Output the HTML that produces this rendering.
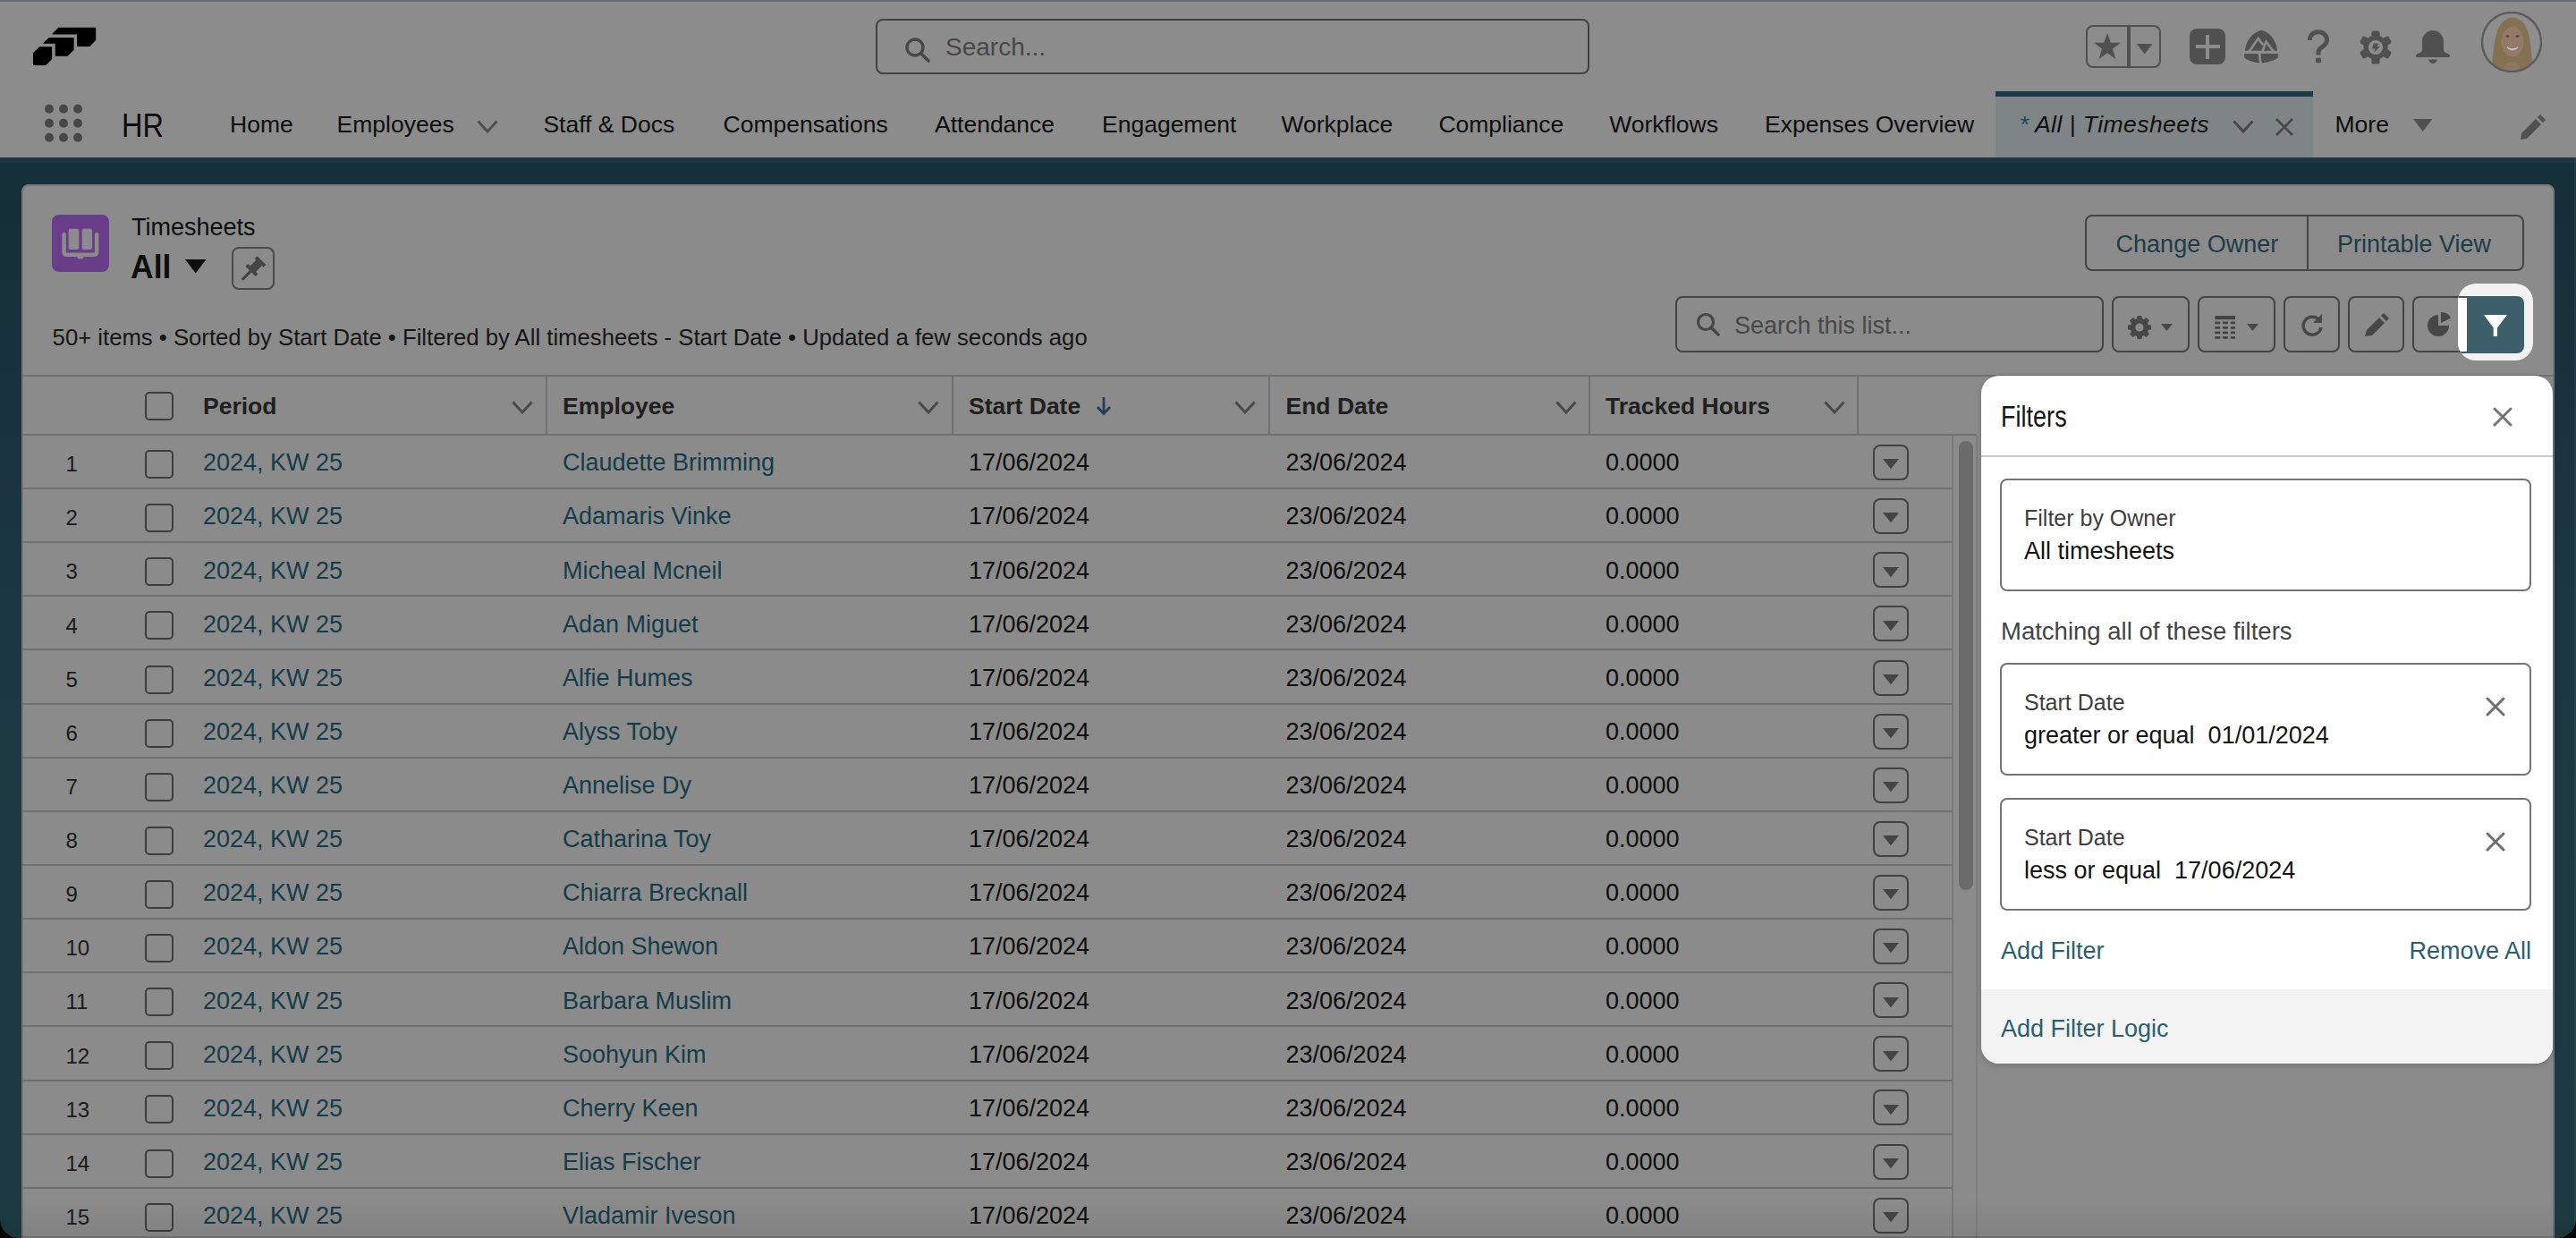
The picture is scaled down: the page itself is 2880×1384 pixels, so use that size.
<!DOCTYPE html>
<html><head><meta charset="utf-8"><title>Timesheets</title>
<style>
html,body{margin:0;padding:0;}
body{width:2880px;height:1384px;overflow:hidden;position:relative;background:#8c8c8c;font-family:"Liberation Sans", sans-serif;}
.t{position:absolute;white-space:pre;}
.r{position:absolute;}
</style></head><body>
<div class="r" style="left:0px;top:0px;width:2880px;height:176px;background:#8c8c8c;border-radius:0;"></div><div class="r" style="left:0px;top:0px;width:2880px;height:2px;background:#686c71;border-radius:0;"></div><svg class="r" style="left:0px;top:0px;" width="140" height="90" viewBox="0 0 140 90"><path d="M58.4,37.8 L65.4,30.8 L107.2,30.8 L107.2,45 L100.2,52 L58.4,52 Z" fill="#000"/><path d="M47.7,48.9 L54.7,41.9 L82.6,41.9 L82.6,55.8 L75.6,62.8 L47.7,62.8 Z" fill="#000" stroke="#8c8c8c" stroke-width="7" paint-order="stroke"/><path d="M37,59.3 L44,52.3 L58.2,52.3 L58.2,66 L51.2,73 L37,73 Z" fill="#000" stroke="#8c8c8c" stroke-width="7" paint-order="stroke"/></svg><div class="r" style="left:979px;top:21px;width:798px;height:62px;background:none;border:2px solid #424242;box-sizing:border-box;border-radius:8px;"></div><svg class="r" style="left:1010px;top:40px;" width="32" height="32" viewBox="0 0 32 32"><circle cx="13" cy="13" r="9" fill="none" stroke="#474747" stroke-width="3.4"/><line x1="19.5" y1="19.5" x2="28" y2="28" stroke="#474747" stroke-width="3.6" stroke-linecap="round"/></svg><div class="t" style="left:1057px;top:38.99px;font-size:28px;line-height:28px;color:#474747;font-weight:400;">Search...</div><div class="r" style="left:2332px;top:28px;width:84px;height:48px;background:none;border:2px solid #505050;box-sizing:border-box;border-radius:8px;"></div><div class="r" style="left:2378px;top:29px;width:4px;height:46px;background:#505050;border-radius:0;"></div><svg class="r" style="left:2340px;top:36px;" width="32" height="32" viewBox="0 0 32 32"><path d="M16,1 L19.8,11.8 L31,11.8 L22,18.6 L25.3,30 L16,23.2 L6.7,30 L10,18.6 L1,11.8 L12.2,11.8 Z" fill="#505050"/></svg><svg class="r" style="left:2389px;top:49px;" width="18" height="12" viewBox="0 0 18 12"><path d="M0,0 L17.5,0 L8.75,11.5 Z" fill="#505050"/></svg><div class="r" style="left:2448px;top:32px;width:40px;height:40px;background:#505050;border-radius:8px;"></div><div class="r" style="left:2454.5px;top:50.2px;width:27.5px;height:4.099999999999994px;background:#8c8c8c;border-radius:0;"></div><div class="r" style="left:2466px;top:38.5px;width:4.199999999999818px;height:27.5px;background:#8c8c8c;border-radius:0;"></div><svg class="r" style="left:2509px;top:33px;" width="38" height="38" viewBox="0 0 38 38"><path d="M1,23.7 C1.5,13 9,3.5 19.4,0.5 C29.5,3.5 36.5,13 37,23.7 Z" fill="#505050"/>
<path d="M5.7,24.5 L15.7,9.9 L21.2,17.2 M20.3,24.5 L24.6,13.6 L32.6,24.5" fill="none" stroke="#8c8c8c" stroke-width="2.6" stroke-linejoin="miter"/>
<path d="M0.2,27 L37.8,27 L37.8,31.8 C32,35.5 25,37.4 19,37.4 C13,37.4 6,35.5 0.2,31.8 Z" fill="#505050"/>
<path d="M16,26.5 C20,29.5 15.5,32.5 19,38" fill="none" stroke="#8c8c8c" stroke-width="2.6"/></svg><svg class="r" style="left:2578px;top:33px;" width="28" height="39" viewBox="0 0 28 39"><path d="M4.3,12 C4.3,6 8.5,2.8 14,2.8 C19.5,2.8 23.6,6.5 23.6,11.5 C23.6,16 20.5,18 17.5,20 C15,21.6 14,23 14,26 L14,28.5" fill="none" stroke="#505050" stroke-width="5" stroke-linecap="butt"/><rect x="11" y="31.7" width="6" height="5.6" rx="1" fill="#505050"/></svg><svg class="r" style="left:2637px;top:34px;" width="38" height="38" viewBox="0 0 38 38"><circle cx="19" cy="19" r="13.6" fill="#505050"/><rect x="-4.6" y="-18.5" width="9.2" height="9" rx="2.6" fill="#505050" transform="translate(19,19) rotate(0)"/><rect x="-4.6" y="-18.5" width="9.2" height="9" rx="2.6" fill="#505050" transform="translate(19,19) rotate(60)"/><rect x="-4.6" y="-18.5" width="9.2" height="9" rx="2.6" fill="#505050" transform="translate(19,19) rotate(120)"/><rect x="-4.6" y="-18.5" width="9.2" height="9" rx="2.6" fill="#505050" transform="translate(19,19) rotate(180)"/><rect x="-4.6" y="-18.5" width="9.2" height="9" rx="2.6" fill="#505050" transform="translate(19,19) rotate(240)"/><rect x="-4.6" y="-18.5" width="9.2" height="9" rx="2.6" fill="#505050" transform="translate(19,19) rotate(300)"/><circle cx="19" cy="19" r="8.1" fill="#8c8c8c"/><path d="M16.8,14.6 L22.3,14.6 L20.5,18.3 L23.8,18.3 L17.5,24.6 L18.6,20.5 L14.9,20.5 Z" fill="#505050"/></svg><svg class="r" style="left:2701px;top:33.5px;" width="38" height="38" viewBox="0 0 38 38"><path d="M19,0 C12,0 7,5.5 7,12.5 L7,22 C7,24 5,25 2,26 C0.5,26.5 0,27 0,28.5 C0,29.5 1,30 2,30 L36,30 C37,30 38,29.5 38,28.5 C38,27 37.5,26.5 36,26 C33,25 31,24 31,22 L31,12.5 C31,5.5 26,0 19,0 Z" fill="#505050"/><path d="M14,32.5 L24,32.5 C23,35.5 21,37 19,37 C17,37 15,35.5 14,32.5 Z" fill="#505050"/></svg><svg class="r" style="left:2774px;top:13px;" width="68" height="68" viewBox="0 0 68 68"><defs><clipPath id="avc"><circle cx="34" cy="34" r="32.5"/></clipPath></defs>
<circle cx="34" cy="34" r="33" fill="#8e8e8e"/>
<g clip-path="url(#avc)">
<path d="M11,70 C13,50 14,36 17,25 C20,14 27,6.5 35,6.5 C43,6.5 50,13 53,25 C56,37 56,52 59,70 Z" fill="#847151"/>
<path d="M24,70 C25,60 28,56 34.5,56 C41,56 44,60 45,70 Z" fill="#8c7766"/>
<ellipse cx="35" cy="33.5" rx="12.5" ry="17" fill="#937a68"/>
<path d="M22,20 C26,14 32,11 36,13 C32,17 26,21 22,28 Z" fill="#847151"/>
<path d="M29,39 C32,42 38,42 41,39 L41,40.5 C38,44 32,44 29,40.5 Z" fill="#c9c2bb"/>
<ellipse cx="29.5" cy="27.5" rx="2" ry="1" fill="#4a3a30"/><ellipse cx="40.5" cy="27.5" rx="2" ry="1" fill="#4a3a30"/>
</g>
<circle cx="34" cy="34" r="33" fill="none" stroke="#5c5c5c" stroke-width="2.4"/></svg><svg class="r" style="left:0px;top:100px;" width="110" height="70" viewBox="0 100 110 70"><circle cx="55" cy="121.8" r="5" fill="#474747"/><circle cx="55" cy="137.8" r="5" fill="#474747"/><circle cx="55" cy="153.8" r="5" fill="#474747"/><circle cx="71" cy="121.8" r="5" fill="#474747"/><circle cx="71" cy="137.8" r="5" fill="#474747"/><circle cx="71" cy="153.8" r="5" fill="#474747"/><circle cx="87" cy="121.8" r="5" fill="#474747"/><circle cx="87" cy="137.8" r="5" fill="#474747"/><circle cx="87" cy="153.8" r="5" fill="#474747"/></svg><div class="t" style="left:136px;top:122.52px;font-size:36px;line-height:36px;color:#0b0b0b;font-weight:400;transform:scaleX(0.9);transform-origin:0 0;">HR</div><div class="t" style="left:257px;top:126.36px;font-size:26.5px;line-height:26.5px;color:#0e0e0e;font-weight:400;">Home</div><div class="t" style="left:376.6px;top:126.36px;font-size:26.5px;line-height:26.5px;color:#0e0e0e;font-weight:400;">Employees</div><div class="t" style="left:607.4px;top:126.36px;font-size:26.5px;line-height:26.5px;color:#0e0e0e;font-weight:400;">Staff &amp; Docs</div><div class="t" style="left:808.6px;top:126.36px;font-size:26.5px;line-height:26.5px;color:#0e0e0e;font-weight:400;">Compensations</div><div class="t" style="left:1045px;top:126.36px;font-size:26.5px;line-height:26.5px;color:#0e0e0e;font-weight:400;">Attendance</div><div class="t" style="left:1232px;top:126.36px;font-size:26.5px;line-height:26.5px;color:#0e0e0e;font-weight:400;">Engagement</div><div class="t" style="left:1432.5px;top:126.36px;font-size:26.5px;line-height:26.5px;color:#0e0e0e;font-weight:400;">Workplace</div><div class="t" style="left:1608.4px;top:126.36px;font-size:26.5px;line-height:26.5px;color:#0e0e0e;font-weight:400;">Compliance</div><div class="t" style="left:1799.2px;top:126.36px;font-size:26.5px;line-height:26.5px;color:#0e0e0e;font-weight:400;">Workflows</div><div class="t" style="left:1973px;top:126.36px;font-size:26.5px;line-height:26.5px;color:#0e0e0e;font-weight:400;">Expenses Overview</div><svg class="r" style="left:533px;top:134px;" width="24" height="15" viewBox="0 0 24 15"><path d="M1.5,1.5 L12.0,13 L22.5,1.5" fill="none" stroke="#505050" stroke-width="3" stroke-linejoin="miter"/></svg><div class="r" style="left:2231px;top:108px;width:355px;height:68px;background:#7f8586;border-radius:0;"></div><div class="r" style="left:2230.5px;top:102px;width:355.5px;height:6px;background:#1c3b48;border-radius:0;"></div><div class="t" style="left:2257.4px;top:126.36px;font-size:26.5px;line-height:26.5px;color:#101010;font-weight:400;font-style:italic;letter-spacing:0.45px;"><span style="color:#1d4652">*</span> All | Timesheets</div><svg class="r" style="left:2496px;top:134px;" width="24" height="15" viewBox="0 0 24 15"><path d="M1.5,1.5 L12.0,13 L22.5,1.5" fill="none" stroke="#484848" stroke-width="3" stroke-linejoin="miter"/></svg><svg class="r" style="left:2543px;top:131px;" width="22" height="22" viewBox="0 0 22 22"><path d="M2,2 L20,20 M20,2 L2,20" stroke="#484848" stroke-width="2.8"/></svg><div class="t" style="left:2610.5px;top:126.36px;font-size:26.5px;line-height:26.5px;color:#0e0e0e;font-weight:400;">More</div><svg class="r" style="left:2698px;top:133px;" width="22" height="14" viewBox="0 0 22 14"><path d="M0,0 L21.4,0 L10.7,14 Z" fill="#505050"/></svg><svg class="r" style="left:2816px;top:128px;" width="30" height="30" viewBox="0 0 30 30"><path d="M3,21 L19,5 L25,11 L9,27 L2,28 Z M21,3 L24,0 L30,6 L27,9 Z" fill="#505050"/></svg><div class="r" style="left:0;top:176px;width:2880px;height:1208px;background:linear-gradient(#15303a 0px, #152f39 60px, #1b3741 500px, #1d3a42 1208px);"></div><div class="r" style="left:0px;top:176px;width:2880px;height:6px;background:#1d3641;border-radius:0;"></div><div class="r" style="left:24px;top:206px;width:2832px;height:1214px;background:#8b8b8b;border:2px solid #777;box-sizing:border-box;border-radius:8px;"></div><div class="r" style="left:58px;top:240px;width:64px;height:64px;background:#6a3d8b;border-radius:8px;"></div><svg class="r" style="left:58px;top:240px;" width="64" height="64" viewBox="0 0 64 64"><path d="M13.6,22 L13.6,41.8 Q13.6,44.8 16.6,44.8 L47.1,44.8 Q50.1,44.8 50.1,41.8 L50.1,22" fill="none" stroke="#8b8b8b" stroke-width="4.4" stroke-linecap="round"/>
<rect x="18.7" y="15.7" width="11.6" height="23.3" rx="2" fill="#8b8b8b"/><rect x="33.7" y="15.7" width="11.3" height="23.3" rx="2" fill="#8b8b8b"/>
<rect x="28.7" y="44" width="6.5" height="5.2" rx="1" fill="#8b8b8b"/></svg><div class="t" style="left:147px;top:240.54px;font-size:27px;line-height:27px;color:#0e0e0e;font-weight:400;">Timesheets</div><div class="t" style="left:145.8px;top:279.67px;font-size:37px;line-height:37px;color:#0e0e0e;font-weight:700;transform:scaleX(0.96);transform-origin:0 0;">All</div><svg class="r" style="left:207px;top:290px;" width="24" height="16" viewBox="0 0 24 16"><path d="M0,0 L23.5,0 L11.75,15.5 Z" fill="#0e0e0e"/></svg><div class="r" style="left:259px;top:276px;width:48px;height:48px;background:none;border:2px solid #4a4a4a;box-sizing:border-box;border-radius:8px;"></div><svg class="r" style="left:250px;top:270px;" width="70" height="60" viewBox="250 270 70 60"><g transform="translate(270.5,313) rotate(45) translate(0,-31)" fill="#444"><rect x="-7" y="0" width="14" height="4" rx="0.8"/><rect x="-4.5" y="3.5" width="9" height="11"/><rect x="-8" y="13.5" width="16" height="4" rx="0.8"/><rect x="-1.6" y="17" width="3.2" height="14" rx="1.6"/></g></svg><div class="t" style="left:58.6px;top:364.84px;font-size:25.7px;line-height:25.7px;color:#161616;font-weight:400;">50+ items • Sorted by Start Date • Filtered by All timesheets - Start Date • Updated a few seconds ago</div><div class="r" style="left:2331px;top:240px;width:491px;height:63px;background:none;border:2px solid #444;box-sizing:border-box;border-radius:8px;"></div><div class="r" style="left:2578.5px;top:241px;width:2.0px;height:61px;background:#444;border-radius:0;"></div><div class="t" style="left:2365.6px;top:259.74px;font-size:27px;line-height:27px;color:#1f3b45;font-weight:400;">Change Owner</div><div class="t" style="left:2613px;top:259.74px;font-size:27px;line-height:27px;color:#1f3b45;font-weight:400;">Printable View</div><div class="r" style="left:1873px;top:331px;width:479px;height:63px;background:none;border:2px solid #444;box-sizing:border-box;border-radius:8px;"></div><svg class="r" style="left:1895px;top:348px;" width="30" height="30" viewBox="0 0 30 30"><circle cx="12" cy="12" r="8.5" fill="none" stroke="#474747" stroke-width="3.2"/><line x1="18" y1="18" x2="26" y2="26" stroke="#474747" stroke-width="3.4" stroke-linecap="round"/></svg><div class="t" style="left:1939px;top:350.64px;font-size:27px;line-height:27px;color:#474747;font-weight:400;">Search this list...</div><div class="r" style="left:2361px;top:331px;width:87px;height:63px;background:none;border:2px solid #444;box-sizing:border-box;border-radius:8px;"></div><div class="r" style="left:2457px;top:331px;width:87px;height:63px;background:none;border:2px solid #444;box-sizing:border-box;border-radius:8px;"></div><div class="r" style="left:2553px;top:331px;width:63px;height:63px;background:none;border:2px solid #444;box-sizing:border-box;border-radius:8px;"></div><div class="r" style="left:2625px;top:331px;width:63px;height:63px;background:none;border:2px solid #444;box-sizing:border-box;border-radius:8px;"></div><div class="r" style="left:2697px;top:331px;width:73px;height:63px;background:none;border:2px solid #444;box-sizing:border-box;border-radius:8px;"></div><svg class="r" style="left:2377px;top:351px;" width="30" height="30" viewBox="0 0 30 30"><path d="M12.65,5.80 L13.13,2.64 L16.87,2.64 L17.35,5.80 L19.85,6.83 L22.42,4.94 L25.06,7.58 L23.17,10.15 L24.20,12.65 L27.36,13.13 L27.36,16.87 L24.20,17.35 L23.17,19.85 L25.06,22.42 L22.42,25.06 L19.85,23.17 L17.35,24.20 L16.87,27.36 L13.13,27.36 L12.65,24.20 L10.15,23.17 L7.58,25.06 L4.94,22.42 L6.83,19.85 L5.80,17.35 L2.64,16.87 L2.64,13.13 L5.80,12.65 L6.83,10.15 L4.94,7.58 L7.58,4.94 L10.15,6.83 Z" fill="#474747" stroke="#474747" stroke-width="1.5" stroke-linejoin="round"/><circle cx="15" cy="15" r="4.6" fill="#8b8b8b"/></svg><svg class="r" style="left:2416px;top:362px;" width="14" height="9" viewBox="0 0 14 9"><path d="M0,0 L13,0 L6.5,8 Z" fill="#474747"/></svg><svg class="r" style="left:2475px;top:352px;" width="24" height="28" viewBox="0 0 24 28"><rect x="1.3" y="7.5" width="6" height="2.8" rx="0.8" fill="#444"/><rect x="1.3" y="13" width="6" height="2.8" rx="0.8" fill="#444"/><rect x="1.3" y="18.5" width="6" height="2.8" rx="0.8" fill="#444"/><rect x="1.3" y="24" width="6" height="2.8" rx="0.8" fill="#444"/><rect x="9.9" y="7.5" width="6" height="2.8" rx="0.8" fill="#444"/><rect x="9.9" y="13" width="6" height="2.8" rx="0.8" fill="#444"/><rect x="9.9" y="18.5" width="6" height="2.8" rx="0.8" fill="#444"/><rect x="9.9" y="24" width="6" height="2.8" rx="0.8" fill="#444"/><rect x="18.7" y="7.5" width="6" height="2.8" rx="0.8" fill="#444"/><rect x="18.7" y="13" width="6" height="2.8" rx="0.8" fill="#444"/><rect x="18.7" y="18.5" width="6" height="2.8" rx="0.8" fill="#444"/><rect x="18.7" y="24" width="6" height="2.8" rx="0.8" fill="#444"/><rect x="1.3" y="1" width="23.4" height="4.2" rx="1" fill="#444"/></svg><svg class="r" style="left:2512px;top:362px;" width="14" height="9" viewBox="0 0 14 9"><path d="M0,0 L13,0 L6.5,8 Z" fill="#474747"/></svg><svg class="r" style="left:2570px;top:349px;" width="30" height="30" viewBox="0 0 30 30"><path d="M23,9 A10,10 0 1 0 25,17" fill="none" stroke="#474747" stroke-width="3.4"/><path d="M26,2 L26,12 L16,12 Z" fill="#474747"/></svg><svg class="r" style="left:2642px;top:349px;" width="30" height="30" viewBox="0 0 30 30"><path d="M2,27 L4,20 L18,6 L24,12 L10,26 Z M20,4 L23,1 L29,7 L26,10 Z" fill="#474747"/></svg><svg class="r" style="left:2713px;top:349px;" width="30" height="30" viewBox="0 0 30 30"><path d="M13,3 A12,12 0 1 0 25,15 L13,15 Z" fill="#474747"/><path d="M16,0 L16,12 L27,6.5 A12,12 0 0 0 16,0 Z" fill="#474747"/></svg><div class="r" style="left:24px;top:419px;width:2832px;height:2px;background:#707070;border-radius:0;"></div><div class="r" style="left:24px;top:485px;width:2186px;height:2px;background:#707070;border-radius:0;"></div><div class="r" style="left:610px;top:420px;width:2px;height:66px;background:#707070;border-radius:0;"></div><div class="r" style="left:1064px;top:420px;width:2px;height:66px;background:#707070;border-radius:0;"></div><div class="r" style="left:1418px;top:420px;width:2px;height:66px;background:#707070;border-radius:0;"></div><div class="r" style="left:1776px;top:420px;width:2px;height:66px;background:#707070;border-radius:0;"></div><div class="r" style="left:2076px;top:420px;width:2px;height:66px;background:#707070;border-radius:0;"></div><div class="r" style="left:162px;top:438px;width:32px;height:32px;background:none;border:2px solid #3d3d3d;box-sizing:border-box;border-radius:5px;"></div><div class="t" style="left:227px;top:440.56px;font-size:26.5px;line-height:26.5px;color:#202020;font-weight:700;">Period</div><svg class="r" style="left:572px;top:448px;" width="24" height="15" viewBox="0 0 24 15"><path d="M1.5,1.5 L12.0,13 L22.5,1.5" fill="none" stroke="#4a4a4a" stroke-width="3" stroke-linejoin="miter"/></svg><div class="t" style="left:629px;top:440.56px;font-size:26.5px;line-height:26.5px;color:#202020;font-weight:700;">Employee</div><svg class="r" style="left:1026px;top:448px;" width="24" height="15" viewBox="0 0 24 15"><path d="M1.5,1.5 L12.0,13 L22.5,1.5" fill="none" stroke="#4a4a4a" stroke-width="3" stroke-linejoin="miter"/></svg><div class="t" style="left:1083px;top:440.56px;font-size:26.5px;line-height:26.5px;color:#202020;font-weight:700;">Start Date</div><svg class="r" style="left:1380px;top:448px;" width="24" height="15" viewBox="0 0 24 15"><path d="M1.5,1.5 L12.0,13 L22.5,1.5" fill="none" stroke="#4a4a4a" stroke-width="3" stroke-linejoin="miter"/></svg><div class="t" style="left:1437.5px;top:440.56px;font-size:26.5px;line-height:26.5px;color:#202020;font-weight:700;">End Date</div><svg class="r" style="left:1739px;top:448px;" width="24" height="15" viewBox="0 0 24 15"><path d="M1.5,1.5 L12.0,13 L22.5,1.5" fill="none" stroke="#4a4a4a" stroke-width="3" stroke-linejoin="miter"/></svg><div class="t" style="left:1795px;top:440.56px;font-size:26.5px;line-height:26.5px;color:#202020;font-weight:700;">Tracked Hours</div><svg class="r" style="left:2039px;top:448px;" width="24" height="15" viewBox="0 0 24 15"><path d="M1.5,1.5 L12.0,13 L22.5,1.5" fill="none" stroke="#4a4a4a" stroke-width="3" stroke-linejoin="miter"/></svg><svg class="r" style="left:1224px;top:443px;" width="20" height="22" viewBox="0 0 20 22"><path d="M10,1 L10,19 M3,12 L10,19.5 L17,12" fill="none" stroke="#283c58" stroke-width="2.8"/></svg><div class="r" style="left:24px;top:545px;width:2158px;height:2px;background:#707070;border-radius:0;"></div><div class="t" style="left:73.4px;top:507.18px;font-size:24px;line-height:24px;color:#1a1a1a;font-weight:400;">1</div><div class="r" style="left:162px;top:503px;width:32px;height:32px;background:none;border:2px solid #3d3d3d;box-sizing:border-box;border-radius:5px;"></div><div class="t" style="left:227px;top:504.34px;font-size:27px;line-height:27px;color:#143c49;font-weight:400;">2024, KW 25</div><div class="t" style="left:629px;top:504.34px;font-size:27px;line-height:27px;color:#143c49;font-weight:400;">Claudette Brimming</div><div class="t" style="left:1083px;top:504.34px;font-size:27px;line-height:27px;color:#0e0e0e;font-weight:400;">17/06/2024</div><div class="t" style="left:1437.5px;top:504.34px;font-size:27px;line-height:27px;color:#0e0e0e;font-weight:400;">23/06/2024</div><div class="t" style="left:1795px;top:504.34px;font-size:27px;line-height:27px;color:#0e0e0e;font-weight:400;">0.0000</div><div class="r" style="left:2094px;top:497px;width:40px;height:40px;background:none;border:2.4px solid #424242;box-sizing:border-box;border-radius:8px;"></div><svg class="r" style="left:2105px;top:513.3px;" width="18" height="12" viewBox="0 0 18 12"><path d="M0,0 L18,0 L9,11.3 Z" fill="#444"/></svg><div class="r" style="left:24px;top:605px;width:2158px;height:2px;background:#707070;border-radius:0;"></div><div class="t" style="left:73.4px;top:567.30px;font-size:24px;line-height:24px;color:#1a1a1a;font-weight:400;">2</div><div class="r" style="left:162px;top:563px;width:32px;height:32px;background:none;border:2px solid #3d3d3d;box-sizing:border-box;border-radius:5px;"></div><div class="t" style="left:227px;top:564.46px;font-size:27px;line-height:27px;color:#143c49;font-weight:400;">2024, KW 25</div><div class="t" style="left:629px;top:564.46px;font-size:27px;line-height:27px;color:#143c49;font-weight:400;">Adamaris Vinke</div><div class="t" style="left:1083px;top:564.46px;font-size:27px;line-height:27px;color:#0e0e0e;font-weight:400;">17/06/2024</div><div class="t" style="left:1437.5px;top:564.46px;font-size:27px;line-height:27px;color:#0e0e0e;font-weight:400;">23/06/2024</div><div class="t" style="left:1795px;top:564.46px;font-size:27px;line-height:27px;color:#0e0e0e;font-weight:400;">0.0000</div><div class="r" style="left:2094px;top:557px;width:40px;height:40px;background:none;border:2.4px solid #424242;box-sizing:border-box;border-radius:8px;"></div><svg class="r" style="left:2105px;top:573.425px;" width="18" height="12" viewBox="0 0 18 12"><path d="M0,0 L18,0 L9,11.3 Z" fill="#444"/></svg><div class="r" style="left:24px;top:665px;width:2158px;height:2px;background:#707070;border-radius:0;"></div><div class="t" style="left:73.4px;top:627.43px;font-size:24px;line-height:24px;color:#1a1a1a;font-weight:400;">3</div><div class="r" style="left:162px;top:623px;width:32px;height:32px;background:none;border:2px solid #3d3d3d;box-sizing:border-box;border-radius:5px;"></div><div class="t" style="left:227px;top:624.59px;font-size:27px;line-height:27px;color:#143c49;font-weight:400;">2024, KW 25</div><div class="t" style="left:629px;top:624.59px;font-size:27px;line-height:27px;color:#143c49;font-weight:400;">Micheal Mcneil</div><div class="t" style="left:1083px;top:624.59px;font-size:27px;line-height:27px;color:#0e0e0e;font-weight:400;">17/06/2024</div><div class="t" style="left:1437.5px;top:624.59px;font-size:27px;line-height:27px;color:#0e0e0e;font-weight:400;">23/06/2024</div><div class="t" style="left:1795px;top:624.59px;font-size:27px;line-height:27px;color:#0e0e0e;font-weight:400;">0.0000</div><div class="r" style="left:2094px;top:617px;width:40px;height:40px;background:none;border:2.4px solid #424242;box-sizing:border-box;border-radius:8px;"></div><svg class="r" style="left:2105px;top:633.55px;" width="18" height="12" viewBox="0 0 18 12"><path d="M0,0 L18,0 L9,11.3 Z" fill="#444"/></svg><div class="r" style="left:24px;top:725px;width:2158px;height:2px;background:#707070;border-radius:0;"></div><div class="t" style="left:73.4px;top:687.55px;font-size:24px;line-height:24px;color:#1a1a1a;font-weight:400;">4</div><div class="r" style="left:162px;top:683px;width:32px;height:32px;background:none;border:2px solid #3d3d3d;box-sizing:border-box;border-radius:5px;"></div><div class="t" style="left:227px;top:684.71px;font-size:27px;line-height:27px;color:#143c49;font-weight:400;">2024, KW 25</div><div class="t" style="left:629px;top:684.71px;font-size:27px;line-height:27px;color:#143c49;font-weight:400;">Adan Miguet</div><div class="t" style="left:1083px;top:684.71px;font-size:27px;line-height:27px;color:#0e0e0e;font-weight:400;">17/06/2024</div><div class="t" style="left:1437.5px;top:684.71px;font-size:27px;line-height:27px;color:#0e0e0e;font-weight:400;">23/06/2024</div><div class="t" style="left:1795px;top:684.71px;font-size:27px;line-height:27px;color:#0e0e0e;font-weight:400;">0.0000</div><div class="r" style="left:2094px;top:677px;width:40px;height:40px;background:none;border:2.4px solid #424242;box-sizing:border-box;border-radius:8px;"></div><svg class="r" style="left:2105px;top:693.675px;" width="18" height="12" viewBox="0 0 18 12"><path d="M0,0 L18,0 L9,11.3 Z" fill="#444"/></svg><div class="r" style="left:24px;top:786px;width:2158px;height:2px;background:#707070;border-radius:0;"></div><div class="t" style="left:73.4px;top:747.68px;font-size:24px;line-height:24px;color:#1a1a1a;font-weight:400;">5</div><div class="r" style="left:162px;top:744px;width:32px;height:32px;background:none;border:2px solid #3d3d3d;box-sizing:border-box;border-radius:5px;"></div><div class="t" style="left:227px;top:744.84px;font-size:27px;line-height:27px;color:#143c49;font-weight:400;">2024, KW 25</div><div class="t" style="left:629px;top:744.84px;font-size:27px;line-height:27px;color:#143c49;font-weight:400;">Alfie Humes</div><div class="t" style="left:1083px;top:744.84px;font-size:27px;line-height:27px;color:#0e0e0e;font-weight:400;">17/06/2024</div><div class="t" style="left:1437.5px;top:744.84px;font-size:27px;line-height:27px;color:#0e0e0e;font-weight:400;">23/06/2024</div><div class="t" style="left:1795px;top:744.84px;font-size:27px;line-height:27px;color:#0e0e0e;font-weight:400;">0.0000</div><div class="r" style="left:2094px;top:738px;width:40px;height:40px;background:none;border:2.4px solid #424242;box-sizing:border-box;border-radius:8px;"></div><svg class="r" style="left:2105px;top:753.8px;" width="18" height="12" viewBox="0 0 18 12"><path d="M0,0 L18,0 L9,11.3 Z" fill="#444"/></svg><div class="r" style="left:24px;top:846px;width:2158px;height:2px;background:#707070;border-radius:0;"></div><div class="t" style="left:73.4px;top:807.80px;font-size:24px;line-height:24px;color:#1a1a1a;font-weight:400;">6</div><div class="r" style="left:162px;top:804px;width:32px;height:32px;background:none;border:2px solid #3d3d3d;box-sizing:border-box;border-radius:5px;"></div><div class="t" style="left:227px;top:804.96px;font-size:27px;line-height:27px;color:#143c49;font-weight:400;">2024, KW 25</div><div class="t" style="left:629px;top:804.96px;font-size:27px;line-height:27px;color:#143c49;font-weight:400;">Alyss Toby</div><div class="t" style="left:1083px;top:804.96px;font-size:27px;line-height:27px;color:#0e0e0e;font-weight:400;">17/06/2024</div><div class="t" style="left:1437.5px;top:804.96px;font-size:27px;line-height:27px;color:#0e0e0e;font-weight:400;">23/06/2024</div><div class="t" style="left:1795px;top:804.96px;font-size:27px;line-height:27px;color:#0e0e0e;font-weight:400;">0.0000</div><div class="r" style="left:2094px;top:798px;width:40px;height:40px;background:none;border:2.4px solid #424242;box-sizing:border-box;border-radius:8px;"></div><svg class="r" style="left:2105px;top:813.925px;" width="18" height="12" viewBox="0 0 18 12"><path d="M0,0 L18,0 L9,11.3 Z" fill="#444"/></svg><div class="r" style="left:24px;top:906px;width:2158px;height:2px;background:#707070;border-radius:0;"></div><div class="t" style="left:73.4px;top:867.93px;font-size:24px;line-height:24px;color:#1a1a1a;font-weight:400;">7</div><div class="r" style="left:162px;top:864px;width:32px;height:32px;background:none;border:2px solid #3d3d3d;box-sizing:border-box;border-radius:5px;"></div><div class="t" style="left:227px;top:865.09px;font-size:27px;line-height:27px;color:#143c49;font-weight:400;">2024, KW 25</div><div class="t" style="left:629px;top:865.09px;font-size:27px;line-height:27px;color:#143c49;font-weight:400;">Annelise Dy</div><div class="t" style="left:1083px;top:865.09px;font-size:27px;line-height:27px;color:#0e0e0e;font-weight:400;">17/06/2024</div><div class="t" style="left:1437.5px;top:865.09px;font-size:27px;line-height:27px;color:#0e0e0e;font-weight:400;">23/06/2024</div><div class="t" style="left:1795px;top:865.09px;font-size:27px;line-height:27px;color:#0e0e0e;font-weight:400;">0.0000</div><div class="r" style="left:2094px;top:858px;width:40px;height:40px;background:none;border:2.4px solid #424242;box-sizing:border-box;border-radius:8px;"></div><svg class="r" style="left:2105px;top:874.05px;" width="18" height="12" viewBox="0 0 18 12"><path d="M0,0 L18,0 L9,11.3 Z" fill="#444"/></svg><div class="r" style="left:24px;top:966px;width:2158px;height:2px;background:#707070;border-radius:0;"></div><div class="t" style="left:73.4px;top:928.05px;font-size:24px;line-height:24px;color:#1a1a1a;font-weight:400;">8</div><div class="r" style="left:162px;top:924px;width:32px;height:32px;background:none;border:2px solid #3d3d3d;box-sizing:border-box;border-radius:5px;"></div><div class="t" style="left:227px;top:925.21px;font-size:27px;line-height:27px;color:#143c49;font-weight:400;">2024, KW 25</div><div class="t" style="left:629px;top:925.21px;font-size:27px;line-height:27px;color:#143c49;font-weight:400;">Catharina Toy</div><div class="t" style="left:1083px;top:925.21px;font-size:27px;line-height:27px;color:#0e0e0e;font-weight:400;">17/06/2024</div><div class="t" style="left:1437.5px;top:925.21px;font-size:27px;line-height:27px;color:#0e0e0e;font-weight:400;">23/06/2024</div><div class="t" style="left:1795px;top:925.21px;font-size:27px;line-height:27px;color:#0e0e0e;font-weight:400;">0.0000</div><div class="r" style="left:2094px;top:918px;width:40px;height:40px;background:none;border:2.4px solid #424242;box-sizing:border-box;border-radius:8px;"></div><svg class="r" style="left:2105px;top:934.175px;" width="18" height="12" viewBox="0 0 18 12"><path d="M0,0 L18,0 L9,11.3 Z" fill="#444"/></svg><div class="r" style="left:24px;top:1026px;width:2158px;height:2px;background:#707070;border-radius:0;"></div><div class="t" style="left:73.4px;top:988.18px;font-size:24px;line-height:24px;color:#1a1a1a;font-weight:400;">9</div><div class="r" style="left:162px;top:984px;width:32px;height:32px;background:none;border:2px solid #3d3d3d;box-sizing:border-box;border-radius:5px;"></div><div class="t" style="left:227px;top:985.34px;font-size:27px;line-height:27px;color:#143c49;font-weight:400;">2024, KW 25</div><div class="t" style="left:629px;top:985.34px;font-size:27px;line-height:27px;color:#143c49;font-weight:400;">Chiarra Brecknall</div><div class="t" style="left:1083px;top:985.34px;font-size:27px;line-height:27px;color:#0e0e0e;font-weight:400;">17/06/2024</div><div class="t" style="left:1437.5px;top:985.34px;font-size:27px;line-height:27px;color:#0e0e0e;font-weight:400;">23/06/2024</div><div class="t" style="left:1795px;top:985.34px;font-size:27px;line-height:27px;color:#0e0e0e;font-weight:400;">0.0000</div><div class="r" style="left:2094px;top:978px;width:40px;height:40px;background:none;border:2.4px solid #424242;box-sizing:border-box;border-radius:8px;"></div><svg class="r" style="left:2105px;top:994.3px;" width="18" height="12" viewBox="0 0 18 12"><path d="M0,0 L18,0 L9,11.3 Z" fill="#444"/></svg><div class="r" style="left:24px;top:1086px;width:2158px;height:2px;background:#707070;border-radius:0;"></div><div class="t" style="left:73.4px;top:1048.30px;font-size:24px;line-height:24px;color:#1a1a1a;font-weight:400;">10</div><div class="r" style="left:162px;top:1044px;width:32px;height:32px;background:none;border:2px solid #3d3d3d;box-sizing:border-box;border-radius:5px;"></div><div class="t" style="left:227px;top:1045.46px;font-size:27px;line-height:27px;color:#143c49;font-weight:400;">2024, KW 25</div><div class="t" style="left:629px;top:1045.46px;font-size:27px;line-height:27px;color:#143c49;font-weight:400;">Aldon Shewon</div><div class="t" style="left:1083px;top:1045.46px;font-size:27px;line-height:27px;color:#0e0e0e;font-weight:400;">17/06/2024</div><div class="t" style="left:1437.5px;top:1045.46px;font-size:27px;line-height:27px;color:#0e0e0e;font-weight:400;">23/06/2024</div><div class="t" style="left:1795px;top:1045.46px;font-size:27px;line-height:27px;color:#0e0e0e;font-weight:400;">0.0000</div><div class="r" style="left:2094px;top:1038px;width:40px;height:40px;background:none;border:2.4px solid #424242;box-sizing:border-box;border-radius:8px;"></div><svg class="r" style="left:2105px;top:1054.425px;" width="18" height="12" viewBox="0 0 18 12"><path d="M0,0 L18,0 L9,11.3 Z" fill="#444"/></svg><div class="r" style="left:24px;top:1146px;width:2158px;height:2px;background:#707070;border-radius:0;"></div><div class="t" style="left:73.4px;top:1108.43px;font-size:24px;line-height:24px;color:#1a1a1a;font-weight:400;">11</div><div class="r" style="left:162px;top:1104px;width:32px;height:32px;background:none;border:2px solid #3d3d3d;box-sizing:border-box;border-radius:5px;"></div><div class="t" style="left:227px;top:1105.59px;font-size:27px;line-height:27px;color:#143c49;font-weight:400;">2024, KW 25</div><div class="t" style="left:629px;top:1105.59px;font-size:27px;line-height:27px;color:#143c49;font-weight:400;">Barbara Muslim</div><div class="t" style="left:1083px;top:1105.59px;font-size:27px;line-height:27px;color:#0e0e0e;font-weight:400;">17/06/2024</div><div class="t" style="left:1437.5px;top:1105.59px;font-size:27px;line-height:27px;color:#0e0e0e;font-weight:400;">23/06/2024</div><div class="t" style="left:1795px;top:1105.59px;font-size:27px;line-height:27px;color:#0e0e0e;font-weight:400;">0.0000</div><div class="r" style="left:2094px;top:1098px;width:40px;height:40px;background:none;border:2.4px solid #424242;box-sizing:border-box;border-radius:8px;"></div><svg class="r" style="left:2105px;top:1114.55px;" width="18" height="12" viewBox="0 0 18 12"><path d="M0,0 L18,0 L9,11.3 Z" fill="#444"/></svg><div class="r" style="left:24px;top:1207px;width:2158px;height:2px;background:#707070;border-radius:0;"></div><div class="t" style="left:73.4px;top:1168.55px;font-size:24px;line-height:24px;color:#1a1a1a;font-weight:400;">12</div><div class="r" style="left:162px;top:1164px;width:32px;height:32px;background:none;border:2px solid #3d3d3d;box-sizing:border-box;border-radius:5px;"></div><div class="t" style="left:227px;top:1165.71px;font-size:27px;line-height:27px;color:#143c49;font-weight:400;">2024, KW 25</div><div class="t" style="left:629px;top:1165.71px;font-size:27px;line-height:27px;color:#143c49;font-weight:400;">Soohyun Kim</div><div class="t" style="left:1083px;top:1165.71px;font-size:27px;line-height:27px;color:#0e0e0e;font-weight:400;">17/06/2024</div><div class="t" style="left:1437.5px;top:1165.71px;font-size:27px;line-height:27px;color:#0e0e0e;font-weight:400;">23/06/2024</div><div class="t" style="left:1795px;top:1165.71px;font-size:27px;line-height:27px;color:#0e0e0e;font-weight:400;">0.0000</div><div class="r" style="left:2094px;top:1158px;width:40px;height:40px;background:none;border:2.4px solid #424242;box-sizing:border-box;border-radius:8px;"></div><svg class="r" style="left:2105px;top:1174.675px;" width="18" height="12" viewBox="0 0 18 12"><path d="M0,0 L18,0 L9,11.3 Z" fill="#444"/></svg><div class="r" style="left:24px;top:1267px;width:2158px;height:2px;background:#707070;border-radius:0;"></div><div class="t" style="left:73.4px;top:1228.68px;font-size:24px;line-height:24px;color:#1a1a1a;font-weight:400;">13</div><div class="r" style="left:162px;top:1224px;width:32px;height:32px;background:none;border:2px solid #3d3d3d;box-sizing:border-box;border-radius:5px;"></div><div class="t" style="left:227px;top:1225.84px;font-size:27px;line-height:27px;color:#143c49;font-weight:400;">2024, KW 25</div><div class="t" style="left:629px;top:1225.84px;font-size:27px;line-height:27px;color:#143c49;font-weight:400;">Cherry Keen</div><div class="t" style="left:1083px;top:1225.84px;font-size:27px;line-height:27px;color:#0e0e0e;font-weight:400;">17/06/2024</div><div class="t" style="left:1437.5px;top:1225.84px;font-size:27px;line-height:27px;color:#0e0e0e;font-weight:400;">23/06/2024</div><div class="t" style="left:1795px;top:1225.84px;font-size:27px;line-height:27px;color:#0e0e0e;font-weight:400;">0.0000</div><div class="r" style="left:2094px;top:1218px;width:40px;height:40px;background:none;border:2.4px solid #424242;box-sizing:border-box;border-radius:8px;"></div><svg class="r" style="left:2105px;top:1234.8px;" width="18" height="12" viewBox="0 0 18 12"><path d="M0,0 L18,0 L9,11.3 Z" fill="#444"/></svg><div class="r" style="left:24px;top:1327px;width:2158px;height:2px;background:#707070;border-radius:0;"></div><div class="t" style="left:73.4px;top:1288.80px;font-size:24px;line-height:24px;color:#1a1a1a;font-weight:400;">14</div><div class="r" style="left:162px;top:1285px;width:32px;height:32px;background:none;border:2px solid #3d3d3d;box-sizing:border-box;border-radius:5px;"></div><div class="t" style="left:227px;top:1285.96px;font-size:27px;line-height:27px;color:#143c49;font-weight:400;">2024, KW 25</div><div class="t" style="left:629px;top:1285.96px;font-size:27px;line-height:27px;color:#143c49;font-weight:400;">Elias Fischer</div><div class="t" style="left:1083px;top:1285.96px;font-size:27px;line-height:27px;color:#0e0e0e;font-weight:400;">17/06/2024</div><div class="t" style="left:1437.5px;top:1285.96px;font-size:27px;line-height:27px;color:#0e0e0e;font-weight:400;">23/06/2024</div><div class="t" style="left:1795px;top:1285.96px;font-size:27px;line-height:27px;color:#0e0e0e;font-weight:400;">0.0000</div><div class="r" style="left:2094px;top:1279px;width:40px;height:40px;background:none;border:2.4px solid #424242;box-sizing:border-box;border-radius:8px;"></div><svg class="r" style="left:2105px;top:1294.925px;" width="18" height="12" viewBox="0 0 18 12"><path d="M0,0 L18,0 L9,11.3 Z" fill="#444"/></svg><div class="r" style="left:24px;top:1387px;width:2158px;height:2px;background:#707070;border-radius:0;"></div><div class="t" style="left:73.4px;top:1348.93px;font-size:24px;line-height:24px;color:#1a1a1a;font-weight:400;">15</div><div class="r" style="left:162px;top:1345px;width:32px;height:32px;background:none;border:2px solid #3d3d3d;box-sizing:border-box;border-radius:5px;"></div><div class="t" style="left:227px;top:1346.09px;font-size:27px;line-height:27px;color:#143c49;font-weight:400;">2024, KW 25</div><div class="t" style="left:629px;top:1346.09px;font-size:27px;line-height:27px;color:#143c49;font-weight:400;">Vladamir Iveson</div><div class="t" style="left:1083px;top:1346.09px;font-size:27px;line-height:27px;color:#0e0e0e;font-weight:400;">17/06/2024</div><div class="t" style="left:1437.5px;top:1346.09px;font-size:27px;line-height:27px;color:#0e0e0e;font-weight:400;">23/06/2024</div><div class="t" style="left:1795px;top:1346.09px;font-size:27px;line-height:27px;color:#0e0e0e;font-weight:400;">0.0000</div><div class="r" style="left:2094px;top:1339px;width:40px;height:40px;background:none;border:2.4px solid #424242;box-sizing:border-box;border-radius:8px;"></div><svg class="r" style="left:2105px;top:1355.05px;" width="18" height="12" viewBox="0 0 18 12"><path d="M0,0 L18,0 L9,11.3 Z" fill="#444"/></svg><div class="r" style="left:2182px;top:487px;width:2px;height:897px;background:#7a7a7a;border-radius:0;"></div><div class="r" style="left:2190px;top:493px;width:16px;height:502px;background:#6b6b6b;border-radius:8px;"></div><div class="r" style="left:2209px;top:487px;width:2px;height:897px;background:#7f7f7f;border-radius:0;"></div><div class="r" style="left:2748px;top:317px;width:84px;height:86px;background:#f2f2f2;border-radius:20px;"></div><div class="r" style="left:2748px;top:317px;width:84px;height:86px;border-radius:20px;overflow:hidden;"><div style="position:absolute;left:0;top:14px;width:10px;height:64px;background:#fff;border-top:2px solid #555;border-bottom:2px solid #555;box-sizing:border-box"></div></div><div class="r" style="left:2758px;top:331px;width:64px;height:64px;background:#3d5f6c;border-radius:0;border-radius:0 8px 8px 0;"></div><svg class="r" style="left:2775px;top:352px;" width="32" height="25" viewBox="0 0 32 25"><path d="M2,0 L28,0 L17,14.5 L17,24 L12.7,24 L12.7,14.5 Z" fill="#fff"/></svg><div class="r" style="left:2215px;top:420px;width:639px;height:769px;background:#fff;border-radius:20px;overflow:hidden;box-shadow:0 2px 6px rgba(0,0,0,0.18);"><div style="position:absolute;left:0;top:686px;width:640px;height:83px;background:#f3f3f3"></div><div style="position:absolute;left:0;top:89px;width:640px;height:2px;background:#c9c9c9"></div></div><div class="t" style="left:2237px;top:448.86px;font-size:33px;line-height:33px;color:#141414;font-weight:400;transform:scaleX(0.82);transform-origin:0 0;">Filters</div><svg class="r" style="left:2786px;top:454px;" width="24" height="24" viewBox="0 0 24 24"><path d="M3,3 L21,21 M21,3 L3,21" stroke="#747474" stroke-width="2.9" stroke-linecap="round"/></svg><div class="r" style="left:2236px;top:535px;width:594px;height:126px;background:none;border:2px solid #747474;box-sizing:border-box;border-radius:8px;"></div><div class="t" style="left:2263px;top:567.33px;font-size:25px;line-height:25px;color:#3e3e3e;font-weight:400;">Filter by Owner</div><div class="t" style="left:2263px;top:603.14px;font-size:27px;line-height:27px;color:#141414;font-weight:400;">All timesheets</div><div class="t" style="left:2237px;top:691.72px;font-size:27.5px;line-height:27.5px;color:#444;font-weight:400;">Matching all of these filters</div><div class="r" style="left:2236px;top:741px;width:594px;height:126px;background:none;border:2px solid #747474;box-sizing:border-box;border-radius:8px;"></div><div class="t" style="left:2263px;top:772.53px;font-size:25px;line-height:25px;color:#3e3e3e;font-weight:400;">Start Date</div><div class="t" style="left:2263px;top:809.44px;font-size:27px;line-height:27px;color:#141414;font-weight:400;">greater or equal&nbsp; 01/01/2024</div><svg class="r" style="left:2778px;top:778px;" width="24" height="24" viewBox="0 0 24 24"><path d="M3,3 L21,21 M21,3 L3,21" stroke="#6e6e6e" stroke-width="2.9" stroke-linecap="round"/></svg><div class="r" style="left:2236px;top:892px;width:594px;height:126px;background:none;border:2px solid #747474;box-sizing:border-box;border-radius:8px;"></div><div class="t" style="left:2263px;top:923.53px;font-size:25px;line-height:25px;color:#3e3e3e;font-weight:400;">Start Date</div><div class="t" style="left:2263px;top:960.44px;font-size:27px;line-height:27px;color:#141414;font-weight:400;">less or equal&nbsp; 17/06/2024</div><svg class="r" style="left:2778px;top:929px;" width="24" height="24" viewBox="0 0 24 24"><path d="M3,3 L21,21 M21,3 L3,21" stroke="#6e6e6e" stroke-width="2.9" stroke-linecap="round"/></svg><div class="t" style="left:2237px;top:1050.44px;font-size:27px;line-height:27px;color:#2a5f71;font-weight:400;">Add Filter</div><div class="t" style="right:50px;top:1050.44px;font-size:27px;line-height:27px;color:#2a5f71;font-weight:400;">Remove All</div><div class="t" style="left:2237px;top:1137.14px;font-size:27px;line-height:27px;color:#2a5f71;font-weight:400;">Add Filter Logic</div><div class="r" style="left:0;top:1340px;width:2880px;height:44px;background:linear-gradient(rgba(0,0,0,0), rgba(0,0,0,0.07));"></div><div class="r" style="left:24px;top:1382px;width:2832px;height:2px;background:rgba(0,0,0,0.14);border-radius:0;"></div><div class="r" style="left:2878px;top:176px;width:2px;height:1208px;background:rgba(255,255,255,0.05);border-radius:0;"></div><svg class="r" style="left:0;top:1363px" width="21" height="21"><path d="M0,0 A21,21 0 0 0 21,21 L0,21 Z" fill="#050505"/></svg><svg class="r" style="left:2859px;top:1363px" width="21" height="21"><path d="M21,0 A21,21 0 0 1 0,21 L21,21 Z" fill="#050505"/></svg>
</body></html>
